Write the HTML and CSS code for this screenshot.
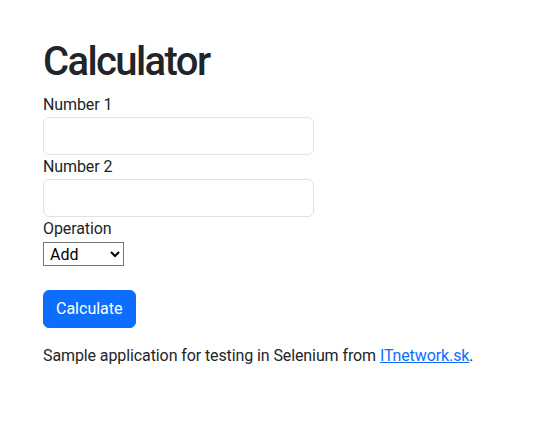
FILE: index.html
```html
<!DOCTYPE html>
<html lang="en">
<head>
<meta charset="utf-8">
<title>Calculator</title>
<link rel="stylesheet" href="styles.css">
</head>
<body>
<main class="container">
  <h1 class="title">Calculator</h1>
  <form class="calc-form">
    <label class="form-label" for="n1">Number 1</label>
    <input class="form-control" id="n1" type="text">
    <label class="form-label" for="n2">Number 2</label>
    <input class="form-control" id="n2" type="text">
    <label class="form-label" for="op">Operation</label>
    <div class="select-row">
      <select class="form-select" id="op">
        <option>Add</option>
        <option>Subtract</option>
        <option>Multiply</option>
        <option>Divide</option>
      </select>
    </div>
    <button class="btn" type="button">Calculate</button>
  </form>
  <p class="note">Sample application for testing in Selenium from <a href="#">ITnetwork.sk</a>.</p>
</main>
</body>
</html>
```
FILE: styles.css
```css
* { box-sizing: border-box; }
html, body { margin: 0; padding: 0; background: #fff; }
body {
  font-family: Roboto, "Noto Sans", "Liberation Sans", sans-serif;
  font-size: 16px;
  line-height: 24px;
  letter-spacing: -0.1px;
  color: #212529;
}
.container {
  padding: 38px 43px 0 43px;
}
.title {
  margin: 0 0 7px 0;
  font-size: 40px;
  line-height: 48px;
  font-weight: 500;
  letter-spacing: -1.6px;
}
.calc-form {
  display: flex;
  flex-direction: column;
  align-items: flex-start;
}
.form-label {
  display: block;
}
.form-control {
  width: 271px;
  height: 38px;
  border: 1px solid #dee2e6;
  border-radius: 6px;
  padding: 6px 12px;
  font: inherit;
  background: #fff;
}
.select-row {
  padding-top: 1px;
  margin-bottom: 24px;
}
.form-select {
  display: block;
  width: 81px;
  height: 24px;
  font: inherit;
  font-size: 16px;
  color: #000;
  border: 1px solid #767676;
  border-radius: 0;
  background: #fff;
  padding: 0 0 0 2px;
}
.btn {
  height: 38px;
  padding: 6px 12px;
  border: 1px solid #0d6efd;
  border-radius: 6px;
  background: #0d6efd;
  color: #fff;
  font: inherit;
}
.note {
  margin: 16px 0 0 0;
}
.note a {
  color: #0d6efd;
  text-decoration: underline;
}
```
